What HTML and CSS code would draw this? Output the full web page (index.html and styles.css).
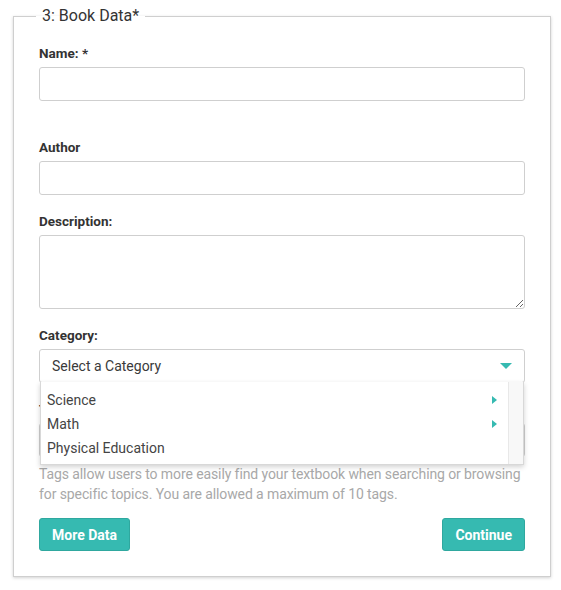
FILE: index.html
```html
<!DOCTYPE html>
<html lang="en">
<head>
<meta charset="utf-8">
<title>Book Data</title>
<link rel="stylesheet" href="styles.css">
</head>
<body>
<form class="form">
  <fieldset class="panel">
    <legend class="panel-legend">3: Book Data*</legend>

    <div class="field field-spaced">
      <label class="field-label">Name: *</label>
      <input class="control" type="text">
    </div>

    <div class="field">
      <label class="field-label">Author</label>
      <input class="control" type="text">
    </div>

    <div class="field">
      <label class="field-label">Description:</label>
      <textarea class="control control-area"></textarea>
    </div>

    <div class="field">
      <label class="field-label">Category:</label>
      <div class="select-wrap">
        <div class="select">
          <span class="select-text">Select a Category</span>
          <span class="select-caret"></span>
        </div>
        <div class="menu">
          <ul class="menu-list">
            <li class="menu-item">Science<span class="menu-arrow"></span></li>
            <li class="menu-item">Math<span class="menu-arrow"></span></li>
            <li class="menu-item">Physical Education</li>
          </ul>
          <div class="menu-track"></div>
        </div>
      </div>
    </div>

    <div class="field field-tags">
      <label class="field-label">Tags:</label>
      <input class="control" type="text">
      <p class="help">Tags allow users to more easily find your textbook when searching or browsing for specific topics. You are allowed a maximum of 10 tags.</p>
    </div>

    <div class="actions">
      <button type="button" class="btn">More Data</button>
      <button type="button" class="btn">Continue</button>
    </div>
  </fieldset>
</form>
</body>
</html>
```

FILE: styles.css
```css
* { box-sizing: border-box; }

html, body {
  margin: 0;
  padding: 0;
  background: #fff;
}

body {
  font-family: Roboto, "Liberation Sans", Arial, sans-serif;
  color: #333;
  width: 561px;
  height: 590px;
}

.form {
  padding: 6px 0 0 13px;
}

.panel {
  margin: 0;
  width: 538px;
  border: 1px solid #cfcfcf;
  padding: 0 25px 25px 25px;
  box-shadow: 0 1px 3px rgba(0, 0, 0, 0.18);
  min-width: 0;
}

.panel-legend {
  margin-left: -3px;
  padding: 0 6px;
  font-size: 16px;
  line-height: 20px;
  color: #333;
}

.field {
  display: flex;
  flex-direction: column;
  margin-bottom: 16px;
}

.field:first-of-type {
  margin-top: 17px;
}

.field-spaced {
  margin-bottom: 36px;
}

.field-label {
  font-size: 13.5px;
  font-weight: 700;
  line-height: 18px;
  color: #333;
  padding-top: 1px;
  margin-bottom: 5px;
}

.control {
  display: block;
  width: 100%;
  height: 34px;
  border: 1px solid #cfcfcf;
  border-radius: 3px;
  background: #fff;
  font: inherit;
  font-size: 14px;
  padding: 0 12px;
  margin: 0;
}

.control-area {
  height: 74px;
  resize: vertical;
  padding: 6px 12px;
}

.select-wrap {
  position: relative;
}

.select {
  display: flex;
  align-items: center;
  justify-content: space-between;
  height: 34px;
  border: 1px solid #cfcfcf;
  border-radius: 3px;
  padding: 0 12px;
  background: #fff;
}

.select-text {
  font-size: 14px;
  color: #3a3a3a;
}

.select-caret {
  width: 0;
  height: 0;
  border-left: 6px solid transparent;
  border-right: 6px solid transparent;
  border-top: 6px solid #36bab1;
}

.menu {
  position: absolute;
  top: 33px;
  left: 1px;
  right: 1px;
  z-index: 5;
  display: flex;
  background: #fff;
  border: 1px solid #d8d8d8;
  border-top: none;
  box-shadow: 0 2px 5px rgba(0, 0, 0, 0.18);
}

.menu-list {
  list-style: none;
  margin: 0;
  padding: 6px 0 4px;
  flex: 1;
}

.menu-item {
  display: flex;
  align-items: center;
  justify-content: space-between;
  height: 24px;
  padding: 0 11px 0 6px;
  font-size: 14px;
  color: #444;
}

.menu-arrow {
  width: 0;
  height: 0;
  border-top: 4.5px solid transparent;
  border-bottom: 4.5px solid transparent;
  border-left: 5px solid #36bab1;
}

.menu-track {
  width: 15px;
  background: #f8f8f8;
  border-left: 1px solid #e8e8e8;
}

.help {
  margin: 7px 0 0;
  font-size: 14px;
  letter-spacing: -0.1px;
  line-height: 20px;
  color: #a8a8a8;
}

.field-tags {
  margin-bottom: 14px;
}

.actions {
  display: flex;
  justify-content: space-between;
}

.btn {
  height: 33px;
  padding: 0 12px;
  border: 1px solid #2fa89f;
  border-radius: 3px;
  background: #36bab1;
  color: #fff;
  font-family: inherit;
  font-size: 14px;
  font-weight: 700;
  cursor: pointer;
}
```
